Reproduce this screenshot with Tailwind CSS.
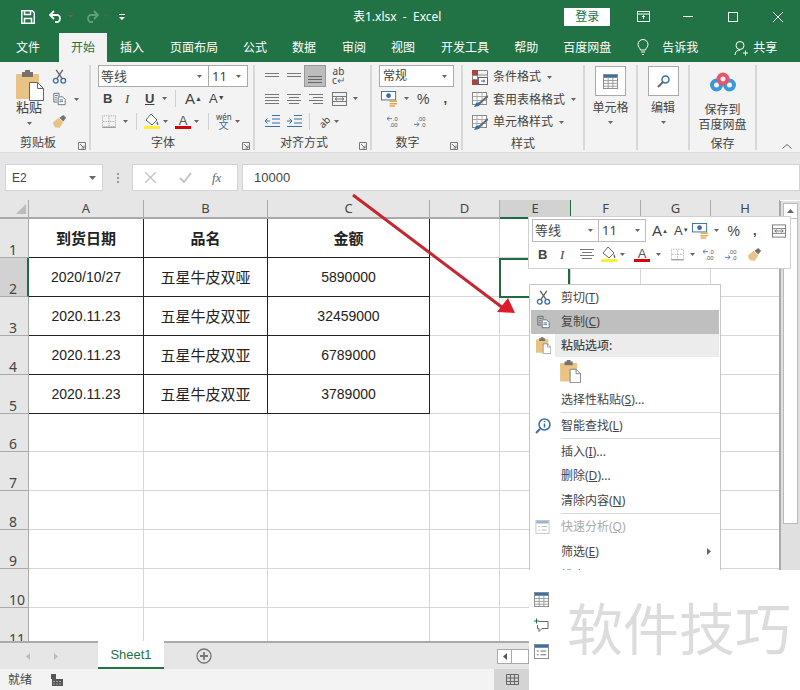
<!DOCTYPE html>
<html lang="zh">
<head>
  <meta charset="UTF-8">
  <title>表1.xlsx - Excel</title>
  <script src="https://cdn.jsdelivr.net/npm/@tailwindcss/browser@4"></script>
</head>
<body class="w-[800px] h-[690px] overflow-hidden bg-white text-[#444] text-[12px] leading-none font-['Noto_Sans','Noto_Sans_CJK_SC',sans-serif]">
  <!-- shared icons -->
  <svg class="hidden">
    <symbol id="caret" viewBox="0 0 7 4"><path d="M0 0h7L3.5 4z" fill="#666"/></symbol>
    <symbol id="scissors" viewBox="0 0 16 16" fill="none"><circle cx="4" cy="12.5" r="2.5" stroke="#3a6ea5" stroke-width="1.4"/><circle cx="12" cy="12.5" r="2.5" stroke="#3a6ea5" stroke-width="1.4"/><path d="M5 10.5 11.5 1M11 10.5 4.5 1" stroke="#666" stroke-width="1.5"/></symbol>
    <symbol id="copy" viewBox="0 0 16 16" fill="none" stroke="#666"><path d="M1.5 1.5h6v3M1.5 1.5v10h4" /><path d="M6.5 5.5h5l3 3v6h-8z" fill="#fff"/><path d="M3 4h3M3 6.500h2M3 9h2M8 9h4M8 11h4" stroke="#3a6ea5"/></symbol>
    <symbol id="paste" viewBox="0 0 28 31"><rect x="0" y="4" width="23" height="25" rx="1" fill="#e8c383"/><rect x="6" y="2" width="11" height="5" fill="#77716a"/><rect x="9" y="0" width="5" height="3" fill="#77716a"/><path d="M13.500 12.500h8l6 6v12h-14z" fill="#fff" stroke="#666"/><path d="M21.500 12.500v6h6" fill="none" stroke="#666"/></symbol>
    <symbol id="brush" viewBox="0 0 16 16"><path d="M1 9 7 4l5 5-4 6-3-1-1 1-1-2-1 0z" fill="#e8c383"/><path d="M8 4l4-3 3 3-3 4z" fill="#77716a"/></symbol>
    <symbol id="fill" viewBox="0 0 16 16"><path d="M7 1l6 6-5 5-6-5z" fill="#fff" stroke="#666"/><path d="M13 8c1 2 2 3 1 4-1 0-2-2-1-4z" fill="#3a6ea5"/><rect y="13" width="16" height="3" fill="#ffee33"/></symbol>
    <symbol id="fcolor" viewBox="0 0 16 16"><text x="8" y="11.500" text-anchor="middle" font-size="13" font-family="Liberation Sans" fill="#555">A</text><rect y="13" width="16" height="3" fill="#d8000f"/></symbol>
    <symbol id="borders" viewBox="0 0 16 14" fill="none"><rect x=".5" y=".5" width="15" height="13" stroke="#999" stroke-dasharray="1 1"/><path d="M8 1v12M1 7h14" stroke="#999" stroke-dasharray="1 1"/><path d="M.5 13.500h15" stroke="#777"/></symbol>
    <symbol id="money" viewBox="0 0 18 17"><rect x=".5" y=".5" width="15" height="9" fill="#fff" stroke="#3a6ea5"/><circle cx="8" cy="5" r="2.500" fill="#3a6ea5"/><path d="M9 11h8M9 13.500h8M9 16h6" stroke="#e8a94c" stroke-width="1.600"/></symbol>
    <symbol id="dec1" viewBox="0 0 18 15"><path d="M0 4h6M0 4l2.500-2.500M0 4l2.500 2.500" stroke="#3a6ea5" fill="none"/><text x="7" y="6.500" font-size="7" font-family="Liberation Sans" fill="#555">.0</text><text x="3" y="14.500" font-size="7" font-family="Liberation Sans" fill="#555">.00</text></symbol>
    <symbol id="dec2" viewBox="0 0 18 15"><path d="M0 11h6M6 11l-2.500-2.500M6 11l-2.500 2.500" stroke="#3a6ea5" fill="none"/><text x="4" y="6.500" font-size="7" font-family="Liberation Sans" fill="#555">.00</text><text x="8" y="14.500" font-size="7" font-family="Liberation Sans" fill="#555">.0</text></symbol>
    <symbol id="lines" viewBox="0 0 14 10"><path d="M0 .5h14M0 3.500h14M0 6.500h14M0 9.500h14" stroke="#777"/></symbol>
    <symbol id="center" viewBox="0 0 14 10"><path d="M0 .5h14M2 3.500h10M0 6.500h14M2 9.500h10" stroke="#777"/></symbol>
    <symbol id="right" viewBox="0 0 14 10"><path d="M0 .5h14M4 3.500h10M0 6.500h14M4 9.500h10" stroke="#777"/></symbol>
    <symbol id="wrap" viewBox="0 0 16 14" fill="none" stroke="#777"><rect x=".5" y=".5" width="14" height="13"/><path d="M1 4.500h13M1 9.500h13M3 7h9M3 7l2-1.500M3 7l2 1.500M12 7l-2-1.500M12 7l-2 1.500"/></symbol>
    <symbol id="table" viewBox="0 0 16 16" fill="none"><rect x=".5" y=".5" width="15" height="15" fill="#fff" stroke="#888"/><rect x="1" y="1" width="14" height="3" fill="#3a6ea5"/><path d="M1 7h14M1 10h14M1 13h14M5.500 4v11M10.500 4v11" stroke="#999"/></symbol>
    <symbol id="cond" viewBox="0 0 16 15" fill="none"><rect x=".5" y=".5" width="5" height="4" fill="#a94442" stroke="#a94442"/><rect x=".5" y="5.500" width="5" height="4" fill="#fff" stroke="#888"/><rect x=".5" y="10.500" width="5" height="4" fill="#a94442" stroke="#a94442"/><path d="M6 .5h9.500v6M6 5h9" stroke="#888"/><rect x="6.500" y="7.500" width="9" height="7" fill="#fff" stroke="#666"/><path d="M9 11h4M12 9.500v3" stroke="#3a6ea5"/></symbol>
    <symbol id="tstyle" viewBox="0 0 16 15" fill="none"><rect x=".5" y=".5" width="14" height="12" fill="#fff" stroke="#888"/><path d="M1 4.500h13M1 8.500h13M5 1v11M10 1v11" stroke="#aaa"/><path d="M16 4 8 11" stroke="#666" stroke-width="2"/><path d="M8 10l-4 1-2 4 5-1 2-3z" fill="#3a6ea5"/></symbol>
    <symbol id="form" viewBox="0 0 16 16" fill="none"><rect x=".5" y=".5" width="15" height="15" fill="#fff" stroke="#888"/><rect x="1" y="1" width="14" height="3" fill="#3a6ea5"/><path d="M3 7.500h2M7 7.500h6M3 11.500h2M7 11.500h6" stroke="#666"/></symbol>
  </svg>

  <!-- title bar -->
  <div class="h-[33px] bg-[#217346] flex items-center text-white relative">
    <svg class="ml-[21px] w-[14px] h-[14px]" viewBox="0 0 14 14" fill="none" stroke="#fff" stroke-width="1.500"><path d="M.8.800h10.500l2 2v10.400H.8z"/><path d="M3.500 1v3.500h6V1M3.500 13V8.500h7V13"/></svg>
    <svg class="ml-[14px] w-[14px] h-[13px]" viewBox="0 0 14 13" fill="none" stroke="#fff" stroke-width="1.800"><path d="M1 5h8a4 4 0 0 1 0 7H6M5 1 1 5l4 4"/></svg>
    <svg class="ml-[5px] w-[5px] h-[3px]"><use href="#caret"/></svg>
    <svg class="ml-[12px] w-[14px] h-[13px] opacity-30" viewBox="0 0 14 13" fill="none" stroke="#fff" stroke-width="1.800"><path d="M13 5H5a4 4 0 0 0 0 7h3M9 1l4 4-4 4"/></svg>
    <svg class="ml-[5px] w-[5px] h-[3px] opacity-30"><use href="#caret"/></svg>
    <svg class="ml-[10px] w-[6px] h-[6px]" viewBox="0 0 6 6" fill="#fff"><path d="M0 0h6v1H0zM0 3h6L3 6z"/></svg>
    <span class="ml-[228px] text-[12px] whitespace-pre">表1.xlsx  -  Excel</span>
    <span class="ml-[123px] w-[46px] h-[18px] bg-white text-[#217346] flex items-center justify-center">登录</span>
    <svg class="ml-[27px] w-[13px] h-[11px]" viewBox="0 0 13 11" fill="none" stroke="#fff"><rect x=".5" y=".5" width="12" height="10"/><path d="M.5 3h12M6.500 8V5M5 6l1.500-1.500L8 6"/></svg>
    <span class="ml-[33px] w-[10px] h-px bg-white"></span>
    <span class="ml-[35px] w-[10px] h-[10px] border border-white"></span>
    <svg class="ml-[35px] w-[10px] h-[10px]" viewBox="0 0 10 10" stroke="#fff"><path d="M0 0l10 10M10 0 0 10"/></svg>
  </div>

  <!-- tabs -->
  <div class="h-[29px] bg-[#217346] flex items-center text-white">
    <span class="ml-[16px]">文件</span>
    <span class="ml-[19px] w-[48px] h-[29px] bg-[#f3f3f3] text-[#217346] flex items-center justify-center">开始</span>
    <span class="ml-[13px]">插入</span>
    <span class="ml-[26px]">页面布局</span>
    <span class="ml-[25px]">公式</span>
    <span class="ml-[25px]">数据</span>
    <span class="ml-[26px]">审阅</span>
    <span class="ml-[25px]">视图</span>
    <span class="ml-[26px]">开发工具</span>
    <span class="ml-[25px]">帮助</span>
    <span class="ml-[25px]">百度网盘</span>
    <svg class="ml-[26px] w-[12px] h-[17px]" viewBox="0 0 12 17" fill="none" stroke="#fff"><path d="M3.500 11C3 9 1 8 1 5.500a5 5 0 0 1 10 0C11 8 9 9 8.500 11zM4 13h4M5 15.500h2"/></svg>
    <span class="ml-[13px]">告诉我</span>
    <svg class="ml-[36px] w-[14px] h-[16px]" viewBox="0 0 14 16" fill="none" stroke="#fff"><circle cx="6" cy="5.500" r="4"/><path d="M1 15c0-3 2-5 5-5M9 13h5M11.500 10.500v5"/></svg>
    <span class="ml-[5px]">共享</span>
  </div>

  <!-- ribbon -->
  <div class="h-[91px] pt-[3px] bg-[#f3f3f3] border-b border-[#dcdcdc] flex relative">
    <!-- clipboard -->
    <div class="w-[91px] border-r-2 border-[#d8d8d8] mb-[2px] flex flex-col">
      <div class="flex flex-1">
        <div class="w-[50px] pl-[16px] pt-[5px] flex flex-col">
          <svg class="w-[28px] h-[31px]"><use href="#paste"/></svg>
          <span class="text-[13px]">粘贴</span>
          <svg class="ml-[11px] mt-[8px] w-[5px] h-[3px]"><use href="#caret"/></svg>
        </div>
        <div class="flex flex-col pl-[2px] pt-[4px] gap-[8px]">
          <svg class="w-[15px] h-[15px]"><use href="#scissors"/></svg>
          <div class="flex items-center gap-[7px]"><svg class="w-[15px] h-[14px]"><use href="#copy"/></svg><svg class="w-[5px] h-[3px]"><use href="#caret"/></svg></div>
          <svg class="w-[15px] h-[15px]"><use href="#brush"/></svg>
        </div>
      </div>
      <div class="h-[18px] pt-[4px] flex items-center pl-[20px] relative">剪贴板<svg class="absolute right-[3px] bottom-[0px] w-[8px] h-[8px]" viewBox="0 0 8 8" fill="none" stroke="#777"><path d="M.5.500h7v7h-7zM2 2l4 4M6 3.500V6H3.500"/></svg></div>
    </div>
    <!-- font -->
    <div class="w-[164px] border-r-2 border-[#d8d8d8] mb-[2px] flex flex-col relative">
      <div class="flex-1 pl-[7px]">
        <div class="flex h-[22px] w-[150px] border border-[#aaa] bg-white">
          <span class="w-[110px] flex items-center justify-between pl-[2px] pr-[6px] border-r border-[#aaa] text-[13px]">等线<svg class="w-[5px] h-[3px]"><use href="#caret"/></svg></span>
          <span class="flex-1 flex items-center justify-between pl-[3px] pr-[6px] text-[13px]">11<svg class="w-[5px] h-[3px]"><use href="#caret"/></svg></span>
        </div>
        <div class="flex items-center h-[23px] text-[13px]">
          <b class="ml-[5px] w-[14px] font-['Liberation_Sans']">B</b>
          <i class="ml-[8px] w-[12px] font-['Liberation_Serif']">I</i>
          <u class="ml-[8px] w-[14px] font-bold font-['Liberation_Sans']">U</u>
          <svg class="ml-[3px] w-[5px] h-[3px]"><use href="#caret"/></svg>
          <span class="ml-[8px] w-px h-[17px] bg-[#d0d0d0]"></span>
          <span class="ml-[9px] text-[15px] font-['Liberation_Sans']">A<sup class="text-[7px]">▲</sup></span>
          <span class="ml-[7px] text-[13px] font-['Liberation_Sans']">A<sup class="text-[7px]">▼</sup></span>
        </div>
        <div class="flex items-center h-[22px]">
          <svg class="ml-[4px] w-[14px] h-[13px]"><use href="#borders"/></svg>
          <svg class="ml-[7px] w-[5px] h-[3px]"><use href="#caret"/></svg>
          <span class="ml-[8px] w-px h-[17px] bg-[#d0d0d0]"></span>
          <svg class="ml-[7px] w-[16px] h-[16px]"><use href="#fill"/></svg>
          <svg class="ml-[3px] w-[5px] h-[3px]"><use href="#caret"/></svg>
          <svg class="ml-[7px] w-[16px] h-[16px]"><use href="#fcolor"/></svg>
          <svg class="ml-[3px] w-[5px] h-[3px]"><use href="#caret"/></svg>
          <span class="ml-[9px] w-px h-[17px] bg-[#d0d0d0]"></span>
          <span class="ml-[7px] w-[15px] text-center text-[8px] leading-[8px]">wén<br><span class="text-[#3a6ea5] text-[10px]">文</span></span>
          <svg class="ml-[4px] w-[5px] h-[3px]"><use href="#caret"/></svg>
        </div>
      </div>
      <div class="h-[18px] pt-[4px] flex items-center justify-center pr-[18px] relative">字体<svg class="absolute right-[3px] bottom-[0px] w-[8px] h-[8px]" viewBox="0 0 8 8" fill="none" stroke="#777"><path d="M.5.500h7v7h-7zM2 2l4 4M6 3.500V6H3.500"/></svg></div>
    </div>
    <!-- align -->
    <div class="w-[117px] border-r-2 border-[#d8d8d8] mb-[2px] flex flex-col relative">
      <div class="flex-1 pl-[10px]">
        <div class="flex items-center h-[22px]">
          <svg class="w-[14px] h-[6px]" viewBox="0 0 14 6"><path d="M0 .5h14M0 3.500h14" stroke="#777"/></svg>
          <svg class="ml-[8px] w-[14px] h-[6px]" viewBox="0 0 14 6"><path d="M0 .5h14M0 3.500h14" stroke="#777"/></svg>
          <span class="ml-[3px] w-[22px] h-[22px] bg-[#bdbdbd] border border-[#999] flex items-end justify-center pb-[3px]"><svg class="w-[14px] h-[7px]" viewBox="0 0 14 7"><path d="M0 .5h14M0 3.500h14M0 6.500h14" stroke="#666"/></svg></span>
          <span class="ml-[6px] w-[13px] text-[10px] leading-[9px] text-center">ab<br>c<span class="text-[#3a6ea5]">↵</span></span>
        </div>
        <div class="flex items-center h-[23px]">
          <svg class="w-[14px] h-[10px]"><use href="#lines"/></svg>
          <svg class="ml-[8px] w-[14px] h-[10px]"><use href="#center"/></svg>
          <svg class="ml-[8px] w-[14px] h-[10px]"><use href="#right"/></svg>
          <svg class="ml-[9px] w-[16px] h-[14px]"><use href="#wrap"/></svg>
          <svg class="ml-[5px] w-[5px] h-[3px]"><use href="#caret"/></svg>
        </div>
        <div class="flex items-center h-[22px]">
          <svg class="w-[15px] h-[12px]" viewBox="0 0 15 12" fill="none"><path d="M7 .5h8M7 4h8M7 8h8M0 11.500h15M0 6h5M0 6l2.500-2.500M0 6l2.500 2.500" stroke="#3a6ea5"/></svg>
          <svg class="ml-[7px] w-[15px] h-[12px]" viewBox="0 0 15 12" fill="none"><path d="M7 .5h8M7 4h8M7 8h8M0 11.500h15M0 6h5M5 6 2.500 3.500M5 6 2.500 8.500" stroke="#3a6ea5"/></svg>
          <span class="ml-[7px] w-px h-[17px] bg-[#d0d0d0]"></span>
          <span class="ml-[8px] w-[14px] text-[10px] -rotate-45">ab</span>
          <svg class="ml-[2px] w-[5px] h-[3px]"><use href="#caret"/></svg>
        </div>
      </div>
      <div class="h-[18px] pt-[4px] flex items-center justify-center pr-[17px] relative">对齐方式<svg class="absolute right-[3px] bottom-[0px] w-[8px] h-[8px]" viewBox="0 0 8 8" fill="none" stroke="#777"><path d="M.5.500h7v7h-7zM2 2l4 4M6 3.500V6H3.500"/></svg></div>
    </div>
    <!-- number -->
    <div class="w-[91px] border-r-2 border-[#d8d8d8] mb-[2px] flex flex-col relative">
      <div class="flex-1 pl-[7px]">
        <div class="w-[75px] h-[22px] border border-[#aaa] bg-white flex items-center justify-between pl-[3px] pr-[6px]">常规<svg class="w-[5px] h-[3px]"><use href="#caret"/></svg></div>
        <div class="flex items-center h-[23px]">
          <svg class="ml-[2px] w-[17px] h-[16px]"><use href="#money"/></svg>
          <svg class="ml-[6px] w-[5px] h-[3px]"><use href="#caret"/></svg>
          <span class="ml-[8px] text-[14px] font-['Liberation_Sans']">%</span>
          <b class="ml-[14px] text-[13px] font-['Liberation_Sans']">,</b>
        </div>
        <div class="flex items-center h-[22px]">
          <svg class="ml-[8px] w-[15px] h-[13px]"><use href="#dec1"/></svg>
          <svg class="ml-[12px] w-[15px] h-[13px]"><use href="#dec2"/></svg>
        </div>
      </div>
      <div class="h-[18px] pt-[4px] flex items-center justify-center pr-[18px] relative">数字<svg class="absolute right-[3px] bottom-[0px] w-[8px] h-[8px]" viewBox="0 0 8 8" fill="none" stroke="#777"><path d="M.5.500h7v7h-7zM2 2l4 4M6 3.500V6H3.500"/></svg></div>
    </div>
    <!-- styles -->
    <div class="w-[122px] border-r-2 border-[#d8d8d8] mb-[2px] flex flex-col">
      <div class="flex-1 pl-[9px] pt-[1px]">
        <div class="flex items-center h-[22px] gap-[5px]"><svg class="w-[16px] h-[15px]"><use href="#cond"/></svg>条件格式<svg class="ml-[1px] w-[5px] h-[3px]"><use href="#caret"/></svg></div>
        <div class="flex items-center h-[23px] gap-[5px]"><svg class="w-[16px] h-[15px]"><use href="#tstyle"/></svg>套用表格格式<svg class="ml-[1px] w-[5px] h-[3px]"><use href="#caret"/></svg></div>
        <div class="flex items-center h-[22px] gap-[5px]"><svg class="w-[16px] h-[15px]"><use href="#tstyle"/></svg>单元格样式<svg class="ml-[1px] w-[5px] h-[3px]"><use href="#caret"/></svg></div>
      </div>
      <div class="h-[18px] pt-[4px] flex items-center justify-center">样式</div>
    </div>
    <!-- cells -->
    <div class="w-[53px] border-r-2 border-[#d8d8d8] mb-[2px] flex flex-col items-center pt-[1px]">
      <span class="w-[31px] h-[30px] border border-[#aaa] bg-white flex items-center justify-center"><svg class="w-[15px] h-[15px]"><use href="#table"/></svg></span>
      <span class="mt-[6px]">单元格</span>
      <svg class="mt-[7px] w-[5px] h-[3px]"><use href="#caret"/></svg>
    </div>
    <!-- edit -->
    <div class="w-[52px] border-r-2 border-[#d8d8d8] mb-[2px] flex flex-col items-center pt-[1px]">
      <span class="w-[31px] h-[30px] border border-[#aaa] bg-white flex items-center justify-center"><svg class="w-[13px] h-[13px]" viewBox="0 0 13 13" fill="none"><circle cx="8.500" cy="4.500" r="3.500" stroke="#3a6ea5" stroke-width="1.500"/><path d="M6 7 1 12" stroke="#666" stroke-width="2"/></svg></span>
      <span class="mt-[6px]">编辑</span>
      <svg class="mt-[7px] w-[5px] h-[3px]"><use href="#caret"/></svg>
    </div>
    <!-- save -->
    <div class="w-[67px] border-r-2 border-[#d8d8d8] mb-[2px] flex flex-col items-center pt-[7px]">
      <svg class="w-[26px] h-[20px]" viewBox="0 0 26 20" fill="none" stroke-width="4"><circle cx="6.500" cy="13" r="4.500" stroke="#3a9ad9"/><circle cx="19.500" cy="13" r="4.500" stroke="#3a9ad9"/><circle cx="13" cy="7" r="4.500" stroke="#e8566b"/></svg>
      <span class="mt-[10px] leading-[15px] text-center">保存到<br>百度网盘</span>
      <span class="mt-[6px]">保存</span>
    </div>
    <svg class="absolute right-[8px] bottom-[3px] w-[10px] h-[5px]" viewBox="0 0 10 5" fill="none" stroke="#666"><path d="M.5 4.500 5 .5l4.500 4"/></svg>
  </div>

  <!-- formula bar -->
  <div class="h-[47px] bg-[#e6e6e6] flex items-center pt-[2px]">
    <div class="ml-[5px] w-[98px] h-[27px] bg-white border border-[#d4d4d4] flex items-center justify-between pl-[6px] pr-[6px] font-['Liberation_Sans']">E2<svg class="w-[7px] h-[4px]"><use href="#caret"/></svg></div>
    <span class="ml-[14px] w-[2px] h-[10px] border-l-2 border-dotted border-[#999]"></span>
    <div class="ml-[13px] w-[106px] h-[27px] bg-white border border-[#d4d4d4] flex items-center pl-[12px] text-[#bbb]">
      <svg class="w-[11px] h-[11px]" viewBox="0 0 11 11" stroke="#c4c4c4" stroke-width="1.400"><path d="M0 0l11 11M11 0 0 11"/></svg>
      <svg class="ml-[23px] w-[13px] h-[11px]" viewBox="0 0 13 11" fill="none" stroke="#c4c4c4" stroke-width="2"><path d="M1 6l4 4 7-9"/></svg>
      <i class="ml-[20px] text-[#666] text-[13px] font-['Liberation_Serif']">fx</i>
    </div>
    <div class="ml-[4px] flex-1 h-[27px] bg-white border border-[#d4d4d4] flex items-center pl-[11px] font-['Liberation_Sans'] text-[13px]">10000</div>
  </div>

  <!-- grid -->
  <div class="relative">
    <div id="sheet" class="grid grid-cols-[29px_115px_124px_162px_70px_71px_70px_70px_69px_20px] grid-rows-[19px_39px_39px_39px_39px_39px_38px_39px_39px_39px_39px_39px] h-[441px] overflow-hidden font-['Liberation_Sans','Noto_Sans_CJK_SC',sans-serif]"></div>
    <!-- selected cell -->
    <div class="absolute left-[499px] top-[58px] w-[71px] h-[40px] border-2 border-[#1e6b41]"></div>
    <!-- scrollbar -->
    <div class="absolute left-[779px] top-[1px] w-[21px] h-[440px] bg-[#e0e0e0] border-l-2 border-[#aaa] pl-[2px] pt-[2px]">
      <div class="w-[15px] h-[16px] bg-white border border-[#bbb] flex items-center justify-center"><svg class="w-[7px] h-[4px] rotate-180"><use href="#caret"/></svg></div>
      <div class="w-[15px] h-[306px] bg-white border border-[#bbb] -mt-px"></div>
    </div>
    <!-- red arrow -->
    <svg class="absolute left-0 top-0 w-[800px] h-[200px] overflow-visible" viewBox="0 0 800 200" fill="none"><path d="M353 -5 503 108" stroke="#c4272f" stroke-width="3"/><path d="M515 113 497 112 508 98z" fill="#dd1c2b"/></svg>
  </div>

  <!-- sheet tabs -->
  <div class="h-[28px] bg-[#e6e6e6] border-t-2 border-[#aaa] flex items-center relative">
    <svg class="ml-[26px] w-[4px] h-[7px]" viewBox="0 0 4 7"><path d="M4 0v7L0 3.500z" fill="#bbb"/></svg>
    <svg class="ml-[24px] w-[4px] h-[7px]" viewBox="0 0 4 7"><path d="M0 0v7l4-3.500z" fill="#bbb"/></svg>
    <div class="ml-[40px] w-[66px] h-[28px] -mt-[2px] bg-white border-b-2 border-[#217346] text-[#217346] flex items-center justify-center text-[13px] font-['Liberation_Sans']">Sheet1</div>
    <svg class="ml-[32px] w-[16px] h-[16px]" viewBox="0 0 16 16" fill="none" stroke="#777" stroke-width="1.300"><circle cx="8" cy="8" r="7"/><path d="M8 4v8M4 8h8" stroke-width="1.800"/></svg>
    <div class="ml-[285px] w-[32px] h-[15px] bg-white border border-[#aaa] flex items-center"><span class="w-[14px] h-full border-r border-[#aaa] flex items-center justify-center"><svg class="w-[4px] h-[7px]" viewBox="0 0 4 7"><path d="M4 0v7L0 3.500z" fill="#555"/></svg></span></div>
  </div>

  <!-- status bar -->
  <div class="h-[21px] bg-[#f3f3f3] flex items-center relative">
    <span class="ml-[8px]">就绪</span>
    <svg class="ml-[19px] w-[13px] h-[12px]" viewBox="0 0 13 12" fill="#555"><rect width="5" height="5" y="0"/><path d="M1 5h11v7H1zM2.500 7v1h1V7zm3 0v1h1V7zm3 0v1h1V7zm-6 2.500v1h1v-1zm3 0v1h1v-1zm3 0v1h1v-1z" fill-rule="evenodd"/></svg>
    <div class="ml-[430px] w-[36px] h-[21px] bg-[#d4d4d4] flex items-center justify-center"><svg class="w-[13px] h-[11px]" viewBox="0 0 13 11" fill="none" stroke="#666"><path d="M.5.500h12v10H.5zM.5 4h12M.5 7.500h12M4.500.5v10M8.500.5v10"/></svg></div>
  </div>

  <!-- mini toolbar -->
  <div class="absolute left-[528px] top-[216px] w-[263px] h-[53px] bg-white border border-[#d0d0d0] pl-[3px] pt-[2px] text-[13px]">
    <div class="flex items-center h-[23px]">
      <div class="flex h-[23px] w-[114px] border border-[#bbb]">
        <span class="w-[66px] flex items-center justify-between pl-[2px] pr-[5px] border-r border-[#bbb]">等线<svg class="w-[5px] h-[3px]"><use href="#caret"/></svg></span>
        <span class="flex-1 flex items-center justify-between pl-[3px] pr-[5px]">11<svg class="w-[5px] h-[3px]"><use href="#caret"/></svg></span>
      </div>
      <span class="ml-[6px] text-[15px] font-['Liberation_Sans']">A<sup class="text-[6px]">▲</sup></span>
      <span class="ml-[6px] text-[13px] font-['Liberation_Sans']">A<sup class="text-[6px]">▼</sup></span>
      <svg class="ml-[3px] w-[17px] h-[16px]"><use href="#money"/></svg>
      <svg class="ml-[5px] w-[5px] h-[3px]"><use href="#caret"/></svg>
      <span class="ml-[9px] text-[14px] font-['Liberation_Sans']">%</span>
      <b class="ml-[13px] font-['Liberation_Sans']">,</b>
      <svg class="ml-[15px] w-[15px] h-[14px]"><use href="#wrap"/></svg>
    </div>
    <div class="flex items-center h-[24px]">
      <b class="ml-[6px] w-[10px] font-['Liberation_Sans']">B</b>
      <i class="ml-[12px] w-[8px] font-['Liberation_Serif']">I</i>
      <svg class="ml-[12px] w-[14px] h-[10px]"><use href="#center"/></svg>
      <svg class="ml-[7px] w-[16px] h-[16px]"><use href="#fill"/></svg>
      <svg class="ml-[3px] w-[5px] h-[3px]"><use href="#caret"/></svg>
      <svg class="ml-[9px] w-[16px] h-[16px]"><use href="#fcolor"/></svg>
      <svg class="ml-[6px] w-[5px] h-[3px]"><use href="#caret"/></svg>
      <svg class="ml-[10px] w-[13px] h-[13px]"><use href="#borders"/></svg>
      <svg class="ml-[6px] w-[5px] h-[3px]"><use href="#caret"/></svg>
      <svg class="ml-[8px] w-[15px] h-[13px]"><use href="#dec1"/></svg>
      <svg class="ml-[7px] w-[15px] h-[13px]"><use href="#dec2"/></svg>
      <svg class="ml-[7px] w-[15px] h-[15px]"><use href="#brush"/></svg>
    </div>
  </div>

  <!-- context menu -->
  <div class="absolute left-[529px] top-[284px] w-[192px] h-[286px] bg-white border-x border-t border-[#c6c6c6] overflow-hidden">
    <div class="h-[25px] flex items-center"><svg class="ml-[6px] w-[15px] h-[15px]"><use href="#scissors"/></svg><span class="ml-[10px]">剪切(<u>T</u>)</span></div>
    <div class="h-[24px] mx-px bg-[#bfbfbf] flex items-center"><svg class="ml-[5px] w-[15px] h-[14px]"><use href="#copy"/></svg><span class="ml-[10px]">复制(<u>C</u>)</span></div>
    <div class="h-[23px] mx-px flex items-center"><svg class="ml-[5px] w-[15px] h-[17px]"><use href="#paste"/></svg><span class="ml-[4px] pl-[6px] h-full flex-1 bg-[#ececec] flex items-center font-medium">粘贴选项:</span></div>
    <div class="h-[30px] pl-[30px] pt-[3px]"><svg class="w-[21px] h-[23px]"><use href="#paste"/></svg></div>
    <div class="h-[23px] flex items-center pl-[31px] pt-[2px]">选择性粘贴(<u>S</u>)...</div>
    <div class="h-px ml-[31px] bg-[#d8d8d8] mt-[2px]"></div>
    <div class="h-[25px] flex items-center"><svg class="ml-[5px] w-[16px] h-[16px]" viewBox="0 0 16 16" fill="none"><circle cx="9.500" cy="6.500" r="5.500" stroke="#3a6ea5" stroke-width="1.500"/><path d="M5 11 1 15" stroke="#3a6ea5" stroke-width="2"/><path d="M9.500 3v1M9.500 5.500v4" stroke="#3a6ea5" stroke-width="1.500"/></svg><span class="ml-[10px]">智能查找(<u>L</u>)</span></div>
    <div class="h-px ml-[31px] bg-[#d8d8d8]"></div>
    <div class="h-[25px] flex items-center pl-[31px]">插入(<u>I</u>)...</div>
    <div class="h-[24px] flex items-center pl-[31px]">删除(<u>D</u>)...</div>
    <div class="h-[25px] flex items-center pl-[31px]">清除内容(<u>N</u>)</div>
    <div class="h-px ml-[31px] bg-[#d8d8d8]"></div>
    <div class="h-[25px] flex items-center text-[#aaa]"><svg class="ml-[5px] w-[15px] h-[14px] opacity-50"><use href="#form"/></svg><span class="ml-[11px]">快速分析(<u>Q</u>)</span></div>
    <div class="h-[25px] flex items-center pl-[31px] relative">筛选(<u>E</u>)<svg class="absolute right-[9px] top-[9px] w-[4px] h-[7px]" viewBox="0 0 4 7"><path d="M0 0v7l4-3.500z" fill="#666"/></svg></div>
    <div class="h-[25px] flex items-center pl-[31px] -mt-[1px]">排序(<u>O</u>)</div>
  </div>

  <!-- watermark panel over the corner -->
  <div class="absolute left-[529px] top-[570px] w-[271px] h-[120px] bg-white">
    <span class="absolute left-[38px] top-[30px] text-[56px] text-[#dcdcdc] whitespace-nowrap">软件技巧</span>
    <div class="absolute left-[5px] top-[22px] flex flex-col gap-[11px]">
      <svg class="w-[15px] h-[15px]"><use href="#table"/></svg>
      <svg class="w-[15px] h-[15px]" viewBox="0 0 15 15" fill="none" stroke="#666"><path d="M5 3.500h9v7H8l-3 3v-3H3.500V7"/><path d="M0 3h5M2.500.5v5" stroke="#217346"/></svg>
      <svg class="w-[15px] h-[15px]"><use href="#form"/></svg>
    </div>
  </div>

  <script>
    // rows of the sheet, header row first
    const cols = ['A', 'B', 'C', 'D', 'E', 'F', 'G', 'H'];
    const data = [
      ['到货日期', '品名', '金额'],
      ['2020/10/27', '五星牛皮双哑', '5890000'],
      ['2020.11.23', '五星牛皮双亚', '32459000'],
      ['2020.11.23', '五星牛皮双亚', '6789000'],
      ['2020.11.23', '五星牛皮双亚', '3789000'],
    ];
    const sheet = document.getElementById('sheet');

    function cell(cls, text) {
      const d = document.createElement('div');
      d.className = cls;
      d.textContent = text || '';
      sheet.appendChild(d);
    }

    cell('bg-[#e6e6e6] border-b-2 border-r border-[#aaa] flex items-end justify-end p-[2px] text-[#bbb] text-[10px]', '◢');
    cols.forEach((c) => {
      const on = c === 'E';
      cell((on ? 'bg-[#d2d2d2] border-[#1e6b41]' : 'bg-[#e6e6e6] border-[#aaa]') + ' border-b-2 border-r flex items-center justify-center text-[13px] text-[#444] font-["Noto_Sans"]', c);
    });
    cell('');

    for (let r = 0; r < 11; r++) {
      cell((r === 1 ? 'bg-[#d2d2d2] border-r-2 border-r-[#1e6b41] ' : 'bg-[#e6e6e6] border-r ') + 'border-b border-[#aaa] flex items-end pl-[9px] text-[14px] font-["Noto_Sans"]', r + 1);
      for (let c = 0; c < 8; c++) {
        if (data[r] && c < 3) {
          const head = r === 0;
          cell('border-r border-b border-[#222] flex items-center justify-center text-[#222] ' + (head ? 'font-bold text-[15px]' : c === 1 ? 'text-[15px]' : 'text-[14px]'), data[r][c]);
        } else {
          cell('border-r border-b border-[#d6d6d6]');
        }
      }
      cell('');
    }
  </script>
</body>
</html>
